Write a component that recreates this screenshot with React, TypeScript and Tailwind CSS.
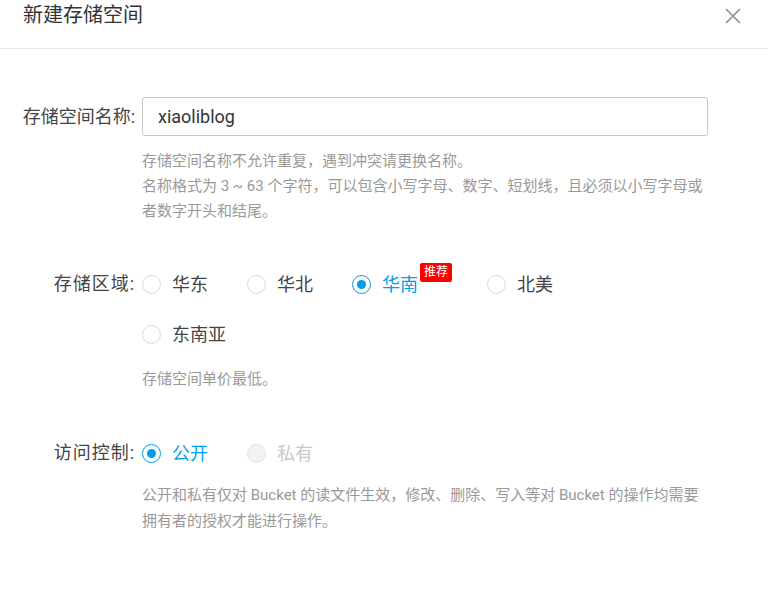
import React from 'react';

type Option = {
  id: string;
  label: string;
  checked?: boolean;
  disabled?: boolean;
  badge?: string;
};

const regions: Option[] = [
  { id: 'east', label: '华东' },
  { id: 'north', label: '华北' },
  { id: 'south', label: '华南', checked: true, badge: '推荐' },
  { id: 'na', label: '北美' },
  { id: 'sea', label: '东南亚' },
];

const access: Option[] = [
  { id: 'public', label: '公开', checked: true },
  { id: 'private', label: '私有', disabled: true },
];

function RadioDot({ checked, disabled }: { checked?: boolean; disabled?: boolean }) {
  if (checked) {
    return (
      <span className="w-[19px] h-[19px] rounded-full border-[1.5px] border-[#00a0e9] flex items-center justify-center shrink-0">
        <span className="w-[9px] h-[9px] rounded-full bg-[#00a0e9]" />
      </span>
    );
  }
  if (disabled) {
    return <span className="w-[19px] h-[19px] rounded-full border border-[#e3e3e3] bg-[#f2f2f2] shrink-0" />;
  }
  return <span className="w-[19px] h-[19px] rounded-full border border-[#dadada] bg-white shrink-0" />;
}

function RadioItem({ item }: { item: Option }) {
  return (
    <label className={`flex items-center h-[50px] ${item.badge ? 'mr-[35px]' : 'mr-[39px]'}`}>
      <RadioDot checked={item.checked} disabled={item.disabled} />
      <span
        className={`ml-[11px] text-[18px] ${
          item.checked ? 'text-[#00a0e9]' : item.disabled ? 'text-[#c8c8c8]' : 'text-[#444]'
        }`}
      >
        {item.label}
      </span>
      {item.badge && (
        <span className="self-start mt-[4px] ml-[2px] h-[19px] px-[4px] rounded-[2px] bg-[#ff0000] text-white text-[12px] leading-[19px]">
          {item.badge}
        </span>
      )}
    </label>
  );
}

export default function App() {
  return (
    <div className="w-[768px] h-[589px] bg-white overflow-hidden font-['Roboto','Noto_Sans_CJK_SC',sans-serif]">
      {/* Header */}
      <header className="h-[49px] border-b border-[#e8e8e8] flex items-start justify-between pl-[23px] pr-[27px]">
        <h1 className="text-[20px] leading-[30px] text-[#333]">新建存储空间</h1>
        <svg className="w-[16px] h-[16px] mt-[7.5px]" viewBox="0 0 16 16" fill="none">
          <path d="M1 1L15 15M15 1L1 15" stroke="#8c8c8c" strokeWidth={1.6} />
        </svg>
      </header>

      <main className="pt-[48px]">
        {/* Bucket name */}
        <div className="flex items-start">
          <div className="w-[135px] h-[39px] leading-[39px] text-right text-[18px] text-[#444]">存储空间名称:</div>
          <input
            className="ml-[7px] w-[566px] h-[39px] border border-[#c8c8c8] rounded-[3px] px-[15px] text-[18px] text-[#333] outline-none"
            defaultValue="xiaoliblog"
          />
        </div>
        <div className="ml-[142px] mt-[13px] w-[566px] text-[15px] leading-[25px] text-[#999]">
          <p>存储空间名称不允许重复，遇到冲突请更换名称。</p>
          <p>名称格式为 3 ~ 63 个字符，可以包含小写字母、数字、短划线，且必须以小写字母或者数字开头和结尾。</p>
        </div>

        {/* Region */}
        <div className="flex items-start mt-[35px]">
          <div className="w-[135px] h-[50px] leading-[50px] text-right text-[18px] tracking-[1px] text-[#444]">存储区域:</div>
          <div className="ml-[7px] w-[460px] flex flex-wrap">
            {regions.map((r) => (
              <RadioItem key={r.id} item={r} />
            ))}
          </div>
        </div>
        <p className="ml-[142px] mt-[8px] text-[15px] leading-[25px] text-[#999]">存储空间单价最低。</p>

        {/* Access */}
        <div className="flex items-start mt-[36px]">
          <div className="w-[135px] h-[50px] leading-[50px] text-right text-[18px] tracking-[1px] text-[#444]">访问控制:</div>
          <div className="ml-[7px] flex">
            {access.map((a) => (
              <RadioItem key={a.id} item={a} />
            ))}
          </div>
        </div>
        <p className="ml-[142px] mt-[5px] w-[566px] text-[15px] leading-[25.5px] text-[#999]">
          公开和私有仅对 Bucket 的读文件生效，修改、删除、写入等对 Bucket 的操作均需要拥有者的授权才能进行操作。
        </p>
      </main>
    </div>
  );
}
